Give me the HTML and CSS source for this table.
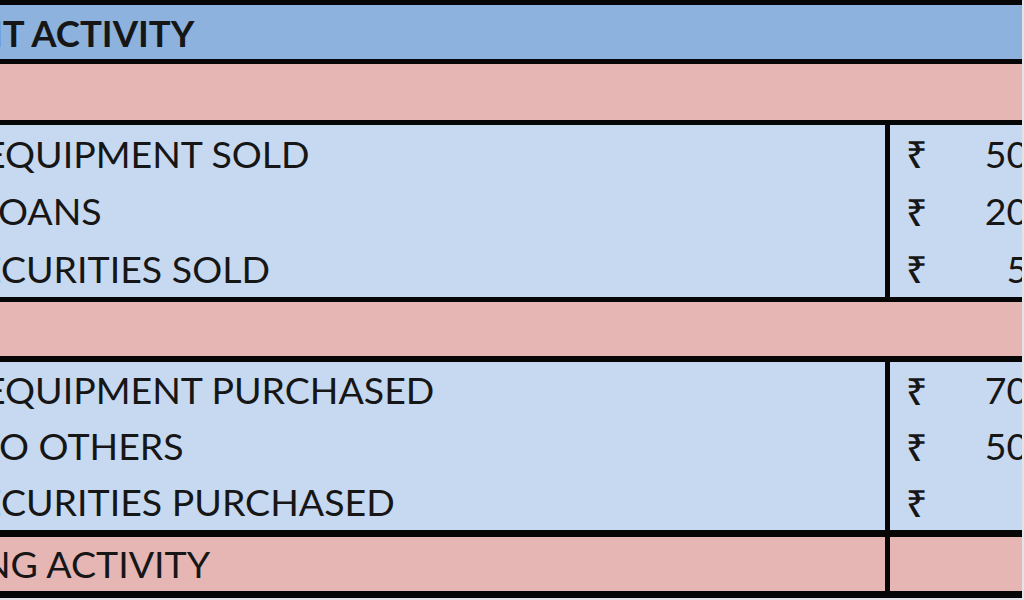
FILE: index.html
```html
<!DOCTYPE html>
<html lang="en">
<head>
<meta charset="utf-8">
<title>Cash flow – investment activity</title>
<link rel="stylesheet" href="styles.css">
</head>
<body>
<div class="sheet">
  <div class="hr"></div>
  <div class="row head">
    <div class="label"><span class="txt bold cut-head">INVESTMENT ACTIVITY</span></div>
  </div>
  <div class="hr"></div>
  <div class="row band"></div>
  <div class="hr"></div>

  <div class="row item r1">
    <div class="label"><span class="txt cut-e">EQUIPMENT SOLD</span></div>
    <div class="vr"></div>
    <div class="value"><span class="cur">₹</span><span class="num">50,000</span></div>
  </div>
  <div class="row item r2">
    <div class="label"><span class="txt cut-l">LOANS</span></div>
    <div class="vr"></div>
    <div class="value"><span class="cur">₹</span><span class="num">20,000</span></div>
  </div>
  <div class="row item r1">
    <div class="label"><span class="txt cut-se">SECURITIES SOLD</span></div>
    <div class="vr"></div>
    <div class="value"><span class="cur">₹</span><span class="num">5,000</span></div>
  </div>

  <div class="hr"></div>
  <div class="row band b2"></div>
  <div class="hr h6"></div>

  <div class="row item r3">
    <div class="label"><span class="txt cut-e">EQUIPMENT PURCHASED</span></div>
    <div class="vr"></div>
    <div class="value"><span class="cur">₹</span><span class="num">70,000</span></div>
  </div>
  <div class="row item r3">
    <div class="label"><span class="txt cut-t">TO OTHERS</span></div>
    <div class="vr"></div>
    <div class="value"><span class="cur">₹</span><span class="num">50,000</span></div>
  </div>
  <div class="row item r3">
    <div class="label"><span class="txt cut-se">SECURITIES PURCHASED</span></div>
    <div class="vr"></div>
    <div class="value"><span class="cur">₹</span><span class="num"></span></div>
  </div>

  <div class="hr h7"></div>
  <div class="row band b3">
    <div class="label"><span class="txt cut-fin">FINANCING ACTIVITY</span></div>
    <div class="vr"></div>
    <div class="value"></div>
  </div>
  <div class="hr h7"></div>
</div>
</body>
</html>
```
FILE: styles.css
```css
* { box-sizing: border-box; }
html, body { margin: 0; padding: 0; }
body {
  width: 1024px;
  height: 600px;
  overflow: hidden;
  background: #e2e4e8;
  font-family: Lato, "Open Sans", sans-serif;
  color: #161616;
}
.sheet { width: 1022px; overflow: hidden; }
.hr { height: 5px; background: #060606; }
.hr.h6 { height: 6px; }
.hr.h7 { height: 7px; }
.row { display: flex; }
.head { height: 54px; background: #8db2de; }
.band { height: 56px; background: #e6b6b4; }
.band.b2, .band.b3 { height: 54px; }
.item { background: #c6d9f0; }
.r1 { height: 57px; }
.r2 { height: 58px; }
.r3 { height: 56px; }
.label {
  flex: 0 0 885px;
  overflow: hidden;
  white-space: nowrap;
  display: flex;
  align-items: center;
}
.head .label { flex-basis: 1022px; padding-top: 2px; }
.txt { font-size: 37.5px; line-height: 1; }
.bold { font-weight: 700; font-size: 36.5px; }
.cut-head { margin-left: -208px; }
.cut-e { margin-left: -16px; }
.cut-l { margin-left: -20px; }
.cut-se { margin-left: -40.5px; }
.cut-t { margin-left: -22px; }
.cut-fin { margin-left: -168px; }
.vr { flex: 0 0 5px; background: #060606; }
.value {
  flex: 0 0 220px;
  display: flex;
  align-items: center;
  justify-content: space-between;
  padding: 0 8px 0 16px;
  font-size: 37.5px;
  line-height: 1;
  white-space: nowrap;
}
.cur { font-family: "Noto Sans", sans-serif; font-size: 37px; font-weight: 500; }
```
